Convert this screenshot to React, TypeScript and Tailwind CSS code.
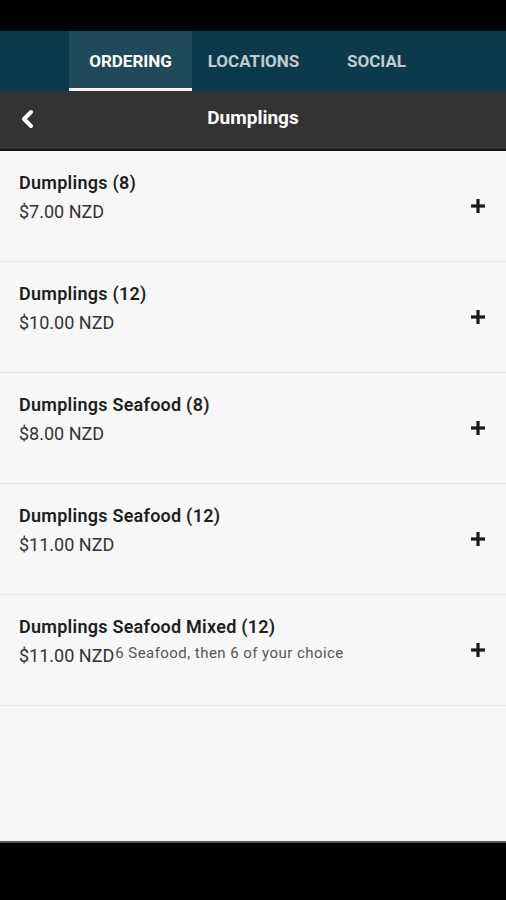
type Item = { name: string; price: string; note?: string };

const items: Item[] = [
  { name: "Dumplings (8)", price: "$7.00 NZD" },
  { name: "Dumplings (12)", price: "$10.00 NZD" },
  { name: "Dumplings Seafood (8)", price: "$8.00 NZD" },
  { name: "Dumplings Seafood (12)", price: "$11.00 NZD" },
  { name: "Dumplings Seafood Mixed (12)", price: "$11.00 NZD", note: "6 Seafood, then 6 of your choice" },
];

const tabs = ["ORDERING", "LOCATIONS", "SOCIAL"];

function PlusIcon() {
  return (
    <svg width="16" height="16" viewBox="0 0 16 16" className="text-[#1a1a1a]">
      <rect x="6.4" y="1" width="3.2" height="14" fill="currentColor" />
      <rect x="1" y="6.4" width="14" height="3.2" fill="currentColor" />
    </svg>
  );
}

function Row({ item }: { item: Item }) {
  return (
    <div className="flex h-[111px] items-center border-b border-[#e6e6e6] pl-[19px] pr-[20px]">
      <div className="flex flex-1 flex-col pb-[18px]">
        <span className="text-[18px] font-semibold leading-[24px] tracking-[0.25px] text-[#1e1e1e]">{item.name}</span>
        <div className="mt-[5px] flex items-start">
          <span className="text-[18px] leading-[24px] text-[#333]">{item.price}</span>
          {item.note && (
            <span className="ml-[1px] text-[15px] leading-[18px] tracking-[0.45px] text-[#555]">{item.note}</span>
          )}
        </div>
      </div>
      <PlusIcon />
    </div>
  );
}

export default function App() {
  return (
    <div className="flex h-[900px] w-[506px] flex-col bg-black font-['Roboto',sans-serif]">
      <div className="h-[31px]" />
      <div className="flex h-[60px] bg-[#0b3a4d] pl-[69px]">
        {tabs.map((t, i) => (
          <div
            key={t}
            className={`flex w-[123px] items-center justify-center text-[17px] font-bold ${
              i === 0 ? "border-b-[3px] border-[#f2f2f2] bg-[#1e4a5c] pt-[5px] text-white" : "pt-[2px] text-[#c3cbd0]"
            }`}
          >
            {t}
          </div>
        ))}
      </div>
      <div className="relative flex h-[60px] items-center justify-center border-b-2 border-[#151515] bg-[#333333] pb-[3px]">
        <svg width="16" height="20" viewBox="0 0 16 20" className="absolute left-[19px] top-[18px] text-white">
          <path d="M12 3 L5 10 L12 17" fill="none" stroke="currentColor" strokeWidth="4" strokeLinecap="round" strokeLinejoin="round" />
        </svg>
        <span className="text-[19px] font-bold text-white">Dumplings</span>
      </div>
      <div className="flex h-[690px] flex-col bg-[#f7f7f7]">
        {items.map((it) => (
          <Row key={it.name} item={it} />
        ))}
      </div>
      <div className="h-[2px] bg-[#555]" />
    </div>
  );
}
